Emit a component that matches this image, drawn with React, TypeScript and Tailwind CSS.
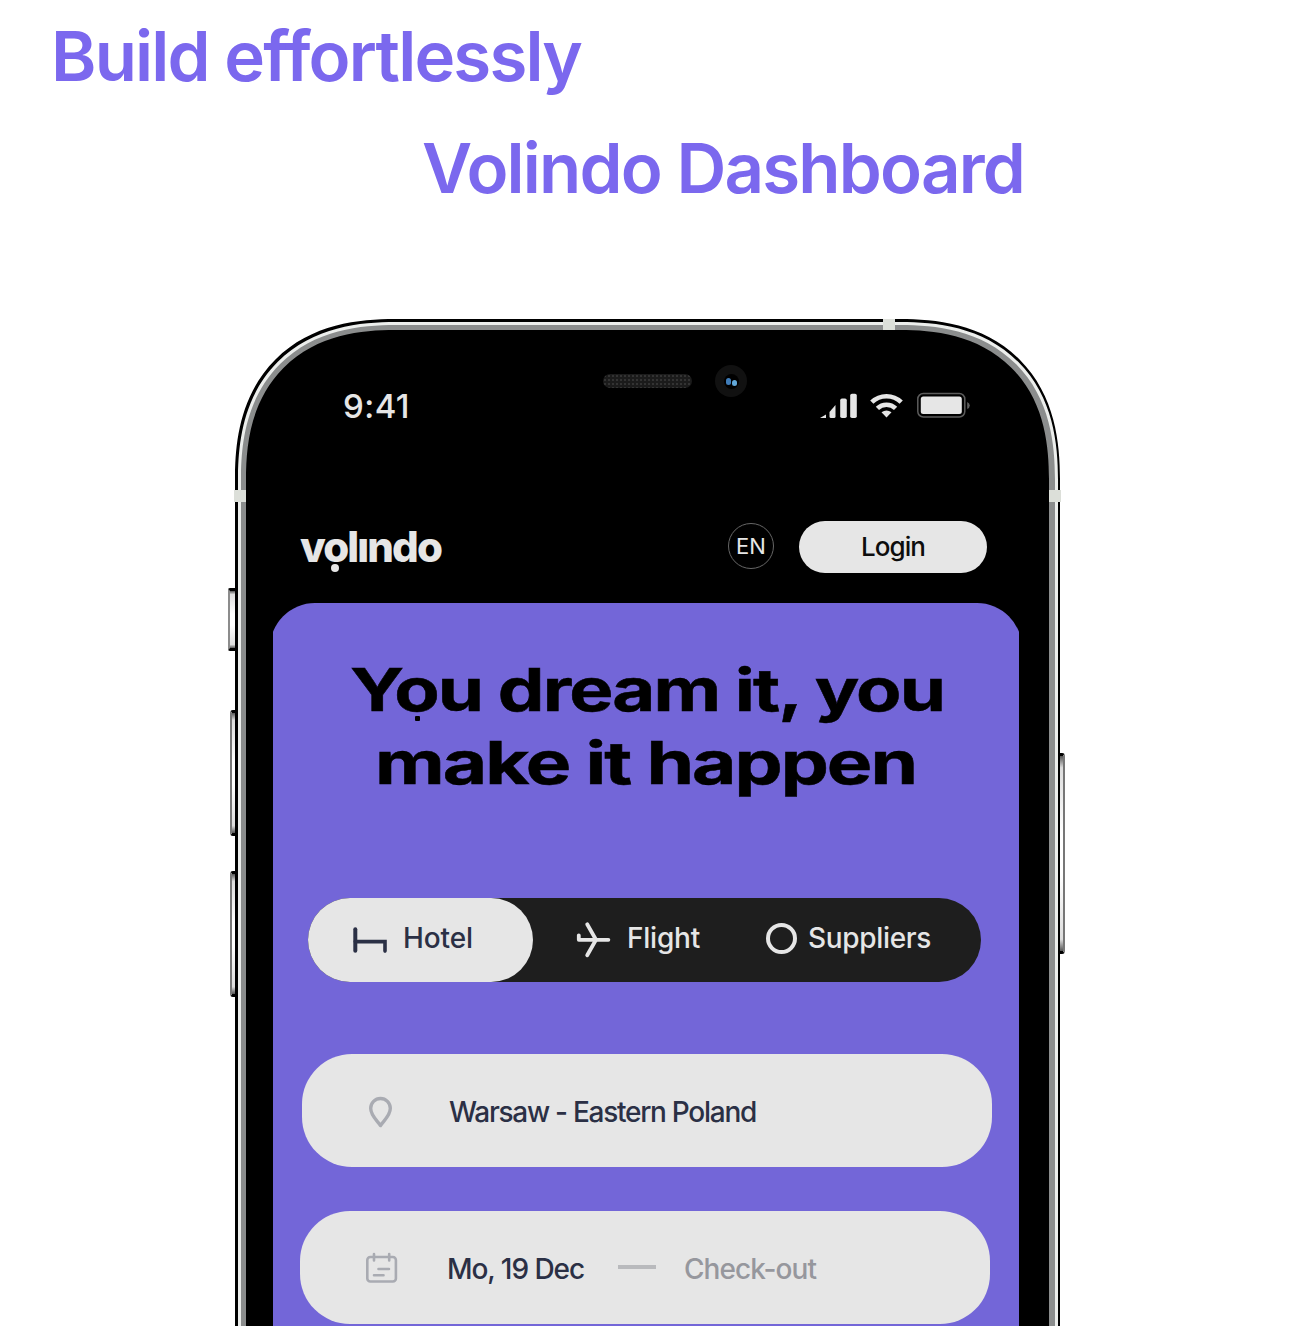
import { useLayoutEffect, useRef, useState } from "react";
import type { ReactNode } from "react";
import clsx from "clsx";

type FitProps = { width: number; className?: string; stretch?: boolean; children: string };

/** One line of text set to an exact width, by tracking or by stretching the letters. */
function Fit({ width, className, stretch = false, children }: FitProps) {
  const ref = useRef<HTMLSpanElement>(null);
  const [natural, setNatural] = useState(0);
  useLayoutEffect(() => {
    if (ref.current && !natural) setNatural(ref.current.getBoundingClientRect().width);
  }, [natural]);
  const style = !natural
    ? undefined
    : stretch
      ? { transform: `scaleX(${width / natural})` }
      : { letterSpacing: `${(width - natural) / children.length}px` };
  return (
    <span className={clsx("block shrink-0 whitespace-nowrap", className)} style={{ width }}>
      <span ref={ref} className="inline-block origin-left" style={style}>
        {children}
      </span>
    </span>
  );
}

function SideButton({ className }: { className: string }) {
  return (
    <div className={clsx("absolute border-y-[3px] border-black bg-[linear-gradient(#555,#ddd_6%,#fff_40%,#fff_60%,#ddd_94%,#555)]", className)} />
  );
}

function Band({ className }: { className: string }) {
  return <div className={clsx("absolute bg-[#dcdfd9]", className)} />;
}

function StatusIcons() {
  return (
    <svg width="150" height="28" viewBox="820 392 150 28" fill="#e6e6e6">
      <path d="M820 418l6-3.500v3.500z" />
      <path d="M829.500 412l6-7v11.500q0 1.500-1.500 1.500h-3q-1.500 0-1.500-1.500z" />
      <rect x="840.200" y="398.500" width="6.600" height="19.500" rx="1.800" />
      <rect x="850.200" y="393.800" width="6.600" height="24.200" rx="1.800" />
      <g fill="none" stroke="#e6e6e6" strokeWidth="4.600">
        <path d="M871.800 402.200a21 21 0 0 1 29.400 0" />
        <path d="M877.400 408.400a13 13 0 0 1 18.200 0" />
      </g>
      <path d="M881.500 412.200q5-3.600 10 0l-5 5.400z" />
      <rect x="917.800" y="393.500" width="47" height="23.500" rx="5.500" fill="none" stroke="#5c5c5c" strokeWidth="1.500" />
      <rect x="920.800" y="396.500" width="41" height="17.500" rx="2.500" />
      <path d="M967.200 402q2.600 1 2.600 3.500t-2.600 3.500z" fill="#5c5c5c" />
    </svg>
  );
}

function BedIcon() {
  return (
    <svg width="36" height="28" viewBox="352 926 36 28" fill="none" stroke="#2b3045" strokeWidth="4" strokeLinecap="round">
      <path d="M355.300 929.300v21.500" />
      <path d="M355.300 941.600h29.700v9.500" strokeWidth="3.600" />
    </svg>
  );
}

function PlaneIcon() {
  return (
    <svg width="36" height="38" viewBox="576 921 36 38" fill="none" stroke="#e6e6e6" strokeWidth="3.800" strokeLinecap="round" strokeLinejoin="round">
      <path d="M578.800 935.300v4.500h29.600" />
      <path d="M587.200 924.300l8.800 15.500-8.800 15.500" />
    </svg>
  );
}

function PinIcon() {
  return (
    <svg width="26" height="34" viewBox="367 1094.500 26 34" fill="none" stroke="#a9abb2" strokeWidth="3.400" strokeLinejoin="round">
      <path d="M380.500 1125c-2.800-4.600-9.800-9.500-9.800-17.200a9.800 9.800 0 0 1 19.600 0c0 7.700-7 12.600-9.800 17.200z" />
    </svg>
  );
}

function CalendarIcon() {
  return (
    <svg width="34" height="34" viewBox="364 1252 34 34" fill="none" stroke="#a9abb2" strokeWidth="2.600" strokeLinecap="round">
      <rect x="367.300" y="1257" width="28.600" height="24.500" rx="3" />
      <path d="M374 1254v6.500M389.200 1254v6.500M378.500 1269h10.500M374 1275.200h9.500" />
    </svg>
  );
}

function Field({ className, children }: { className: string; children: ReactNode }) {
  return (
    <div className={clsx("flex h-[113px] w-[690px] items-center rounded-[50px] bg-[#e6e6e6] pt-[3px] text-[28px] font-medium text-[#2b3045]", className)}>
      {children}
    </div>
  );
}

export default function App() {
  return (
    <main className="h-[1326px] w-[1296px] overflow-hidden bg-white font-['Inter',sans-serif] leading-none">
      <header className="text-[69px] font-semibold text-[#7b68ee]">
        <h1 className="flex h-[113px] items-center pl-[51px]">
          <Fit width={530}>Build effortlessly</Fit>
        </h1>
        <h2 className="flex h-[111px] items-center pl-[422px]">
          <Fit width={602}>Volindo Dashboard</Fit>
        </h2>
      </header>

      <section className="relative mt-[95px] ml-[235px] h-[1100px] w-[825px]">
        <SideButton className="top-[269px] -left-[7px] h-[63px] w-[8px] rounded-l-[2px] border-l-2 border-l-[#8c8c8c]" />
        <SideButton className="top-[391px] -left-[5px] h-[126px] w-[6px] rounded-l-[3px] border-l-2 border-l-[#777]" />
        <SideButton className="top-[552px] -left-[5px] h-[126px] w-[6px] rounded-l-[3px] border-l-2 border-l-[#777]" />
        <SideButton className="top-[434px] -right-[5px] h-[201px] w-[6px] rounded-r-[3px] border-r-2 border-r-[#777]" />

        <div className="relative h-full rounded-t-[138px] bg-black px-[2.500px] pt-[2.500px] supports-[corner-shape:squircle]:rounded-t-[160px] supports-[corner-shape:squircle]:[corner-shape:superellipse(1.25)]">
          <div className="h-full rounded-t-[135.500px] bg-[#eceeec] px-[3px] pt-[3px] supports-[corner-shape:squircle]:rounded-t-[157.500px] supports-[corner-shape:squircle]:[corner-shape:superellipse(1.25)]">
            <div className="h-full rounded-t-[132.500px] bg-[#8b8d8d] px-[5.500px] pt-[5px] supports-[corner-shape:squircle]:rounded-t-[154.500px] supports-[corner-shape:squircle]:[corner-shape:superellipse(1.25)]">
              <div className="h-full rounded-t-[127px] bg-black supports-[corner-shape:squircle]:rounded-t-[149px] supports-[corner-shape:squircle]:[corner-shape:superellipse(1.25)]">
                <div className="flex h-[152px] items-center pr-[79px] pl-[97px]">
                  <Fit width={67} className="mt-px text-[33px] font-medium text-[#e6e6e6]">9:41</Fit>
                  <div className="ml-auto">
                    <StatusIcons />
                  </div>
                </div>

                <div className="mt-[39px] flex h-[52px] items-center pr-[62px] pl-[54px]">
                  <div className="relative">
                    <Fit width={141} className="text-[42px] font-extrabold text-[#e6e6e6]">volındo</Fit>
                    <div className="absolute top-[38px] left-[30.500px] size-[8px] rounded-full bg-[#e6e6e6]" />
                  </div>
                  <div className="mt-[-2px] ml-auto flex size-[46px] items-center justify-center rounded-full border border-[#666]">
                    <Fit width={30} className="text-[22px] text-[#e6e6e6]">EN</Fit>
                  </div>
                  <div className="ml-[25px] flex h-[52px] w-[188px] items-center justify-center rounded-full bg-[#e6e6e6]">
                    <Fit width={64} className="text-[26px] font-medium text-[#0d0d0d]">Login</Fit>
                  </div>
                </div>

                <div className="mt-[30px] ml-[27px] h-[900px] w-[746px] overflow-hidden">
                  <div className="-mx-[3px] h-full rounded-t-[45px] bg-[#7366d8] px-[3px]">
                    <div className="pt-[50px] text-[59px] leading-[73px] font-bold tracking-[-1.500px] text-black [-webkit-text-stroke:0.5px_black]">
                      <div className="relative pl-[77px]">
                        <Fit width={594} stretch>You dream it, you</Fit>
                        <div className="absolute top-[63px] left-[142px] size-[5px] rounded-[1px] bg-black" />
                      </div>
                      <div className="pl-[102px]">
                        <Fit width={541} stretch>make it happen</Fit>
                      </div>
                    </div>

                    <div className="mt-[99px] ml-[35px] flex h-[84px] w-[673px] items-center rounded-full bg-[#1e1e1e] text-[28px] font-medium text-[#e6e6e6]">
                      <div className="flex h-full w-[225px] items-center rounded-full bg-[#e6e6e6] pl-[44px] text-[#2b3045]">
                        <BedIcon />
                        <Fit width={70} className="-mt-[3px] ml-[15px]">Hotel</Fit>
                      </div>
                      <div className="flex items-center pl-[43px]">
                        <PlaneIcon />
                        <Fit width={73} className="-mt-[3px] ml-[15px]">Flight</Fit>
                      </div>
                      <div className="flex items-center pl-[66px]">
                        <div className="-mt-[3px] size-[31px] rounded-full border-[4px] border-[#e6e6e6]" />
                        <Fit width={123} className="-mt-[3px] ml-[11px]">Suppliers</Fit>
                      </div>
                    </div>

                    <Field className="mt-[72px] ml-[29px] pl-[65px]">
                      <PinIcon />
                      <Fit width={307} className="ml-[56px]">Warsaw - Eastern Poland</Fit>
                    </Field>
                    <Field className="mt-[44px] ml-[27px] pl-[64px]">
                      <CalendarIcon />
                      <Fit width={137} className="ml-[49px]">Mo, 19 Dec</Fit>
                      <div className="-mt-[3px] ml-[34px] h-[4px] w-[38px] bg-[#b9babd]" />
                      <Fit width={132} className="ml-[28px] text-[#96979d]">Check-out</Fit>
                    </Field>
                  </div>
                </div>
              </div>
            </div>
          </div>
        </div>

        <Band className="top-0 left-[648px] h-[11px] w-[12px]" />
        <Band className="top-[171px] -left-px h-[12px] w-[12px]" />
        <Band className="top-[171px] -right-px h-[12px] w-[12px]" />

        <div className="absolute top-[55px] left-[368px] h-[14px] w-[89px] rounded-full bg-[#1b1b1b] bg-[radial-gradient(#333_30%,transparent_35%)] bg-size-[4px_4px]" />
        <div className="absolute top-[46px] left-[480px] flex size-[32px] items-center justify-center rounded-full bg-[#111]">
          <div className="flex size-[15px] items-center justify-center gap-px rounded-full bg-black">
            <div className="h-[7px] w-[5px] rounded-full bg-[#3f7cb8]" />
            <div className="mt-[3px] h-[6px] w-[5px] rounded-full bg-[#62a8d8]" />
          </div>
        </div>
      </section>
    </main>
  );
}
